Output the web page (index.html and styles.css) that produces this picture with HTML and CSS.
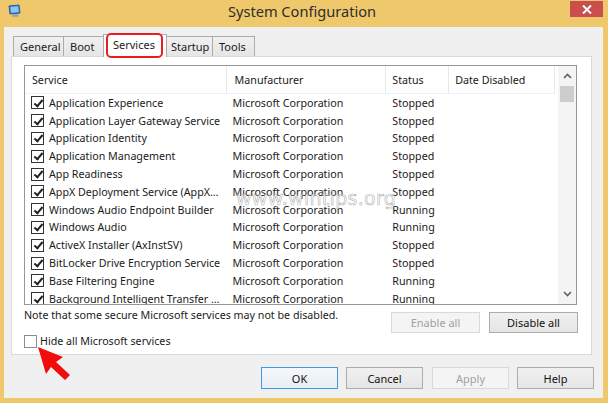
FILE: index.html
```html
<!DOCTYPE html>
<html>
<head>
<meta charset="utf-8">
<link rel="stylesheet" href="styles.css">
</head>
<body>
<div class="window">
  <div class="titlebar">
    <svg class="app-icon" width="13" height="14" viewBox="0 0 13 14">
      <path d="M1 2 L11 1 L12 9 L2 10 Z" fill="#3f86d6" stroke="#2a5b9c" stroke-width="1"/>
      <path d="M2.5 3 L10 2.3 L10.8 8 L3.2 8.8 Z" fill="#8cc4f2"/>
      <path d="M4 10.5 L10 10 L11 12.5 L4.5 13 Z" fill="#9aa4ae"/>
    </svg>
    <div class="title">System Configuration</div>
    <div class="close">
      <svg width="10" height="9" viewBox="0 0 10 9"><path d="M1 0.5 L9 8.5 M9 0.5 L1 8.5" stroke="#fff" stroke-width="2"/></svg>
    </div>
  </div>
  <div class="client">
    <div class="tabs">
      <div class="tab w-general">General</div>
      <div class="tab w-boot">Boot</div>
      <div class="tab w-services active">Services</div>
      <div class="tab w-startup">Startup</div>
      <div class="tab w-tools">Tools</div>
    </div>
    <div class="page">
      <div class="list">
        <div class="list-main">
          <div class="header">
            <div class="col c1">Service</div>
            <div class="col c2">Manufacturer</div>
            <div class="col c3">Status</div>
            <div class="col c4">Date Disabled</div>
          </div>
          <div class="rows">
            <div class="row"><div class="col c1"><span class="cb checked"></span>Application Experience</div><div class="col c2">Microsoft Corporation</div><div class="col c3">Stopped</div><div class="col c4"></div></div>
            <div class="row"><div class="col c1"><span class="cb checked"></span>Application Layer Gateway Service</div><div class="col c2">Microsoft Corporation</div><div class="col c3">Stopped</div><div class="col c4"></div></div>
            <div class="row"><div class="col c1"><span class="cb checked"></span>Application Identity</div><div class="col c2">Microsoft Corporation</div><div class="col c3">Stopped</div><div class="col c4"></div></div>
            <div class="row"><div class="col c1"><span class="cb checked"></span>Application Management</div><div class="col c2">Microsoft Corporation</div><div class="col c3">Stopped</div><div class="col c4"></div></div>
            <div class="row"><div class="col c1"><span class="cb checked"></span>App Readiness</div><div class="col c2">Microsoft Corporation</div><div class="col c3">Stopped</div><div class="col c4"></div></div>
            <div class="row"><div class="col c1"><span class="cb checked"></span>AppX Deployment Service (AppX…</div><div class="col c2">Microsoft Corporation</div><div class="col c3">Stopped</div><div class="col c4"></div></div>
            <div class="row"><div class="col c1"><span class="cb checked"></span>Windows Audio Endpoint Builder</div><div class="col c2">Microsoft Corporation</div><div class="col c3">Running</div><div class="col c4"></div></div>
            <div class="row"><div class="col c1"><span class="cb checked"></span>Windows Audio</div><div class="col c2">Microsoft Corporation</div><div class="col c3">Running</div><div class="col c4"></div></div>
            <div class="row"><div class="col c1"><span class="cb checked"></span>ActiveX Installer (AxInstSV)</div><div class="col c2">Microsoft Corporation</div><div class="col c3">Stopped</div><div class="col c4"></div></div>
            <div class="row"><div class="col c1"><span class="cb checked"></span>BitLocker Drive Encryption Service</div><div class="col c2">Microsoft Corporation</div><div class="col c3">Stopped</div><div class="col c4"></div></div>
            <div class="row"><div class="col c1"><span class="cb checked"></span>Base Filtering Engine</div><div class="col c2">Microsoft Corporation</div><div class="col c3">Running</div><div class="col c4"></div></div>
            <div class="row"><div class="col c1"><span class="cb checked"></span>Background Intelligent Transfer …</div><div class="col c2">Microsoft Corporation</div><div class="col c3">Running</div><div class="col c4"></div></div>
          </div>
        </div>
        <div class="scrollbar">
          <div class="sb-btn"><svg width="9" height="6" viewBox="0 0 9 6"><path d="M1 5 L4.5 1.5 L8 5" fill="none" stroke="#606060" stroke-width="1.6"/></svg></div>
          <div class="sb-thumb"></div>
          <div class="sb-track"></div>
          <div class="sb-btn"><svg width="9" height="6" viewBox="0 0 9 6"><path d="M1 1 L4.5 4.5 L8 1" fill="none" stroke="#606060" stroke-width="1.6"/></svg></div>
        </div>
      </div>
      <div class="note-row">
        <div class="note">Note that some secure Microsoft services may not be disabled.</div>
        <div class="note-btns">
          <div class="btn wide disabled">Enable all</div>
          <div class="btn wide">Disable all</div>
        </div>
      </div>
      <div class="hide-row"><span class="cb plain"></span>Hide all Microsoft services</div>
    </div>
    <div class="footer">
      <div class="btn default">OK</div>
      <div class="btn">Cancel</div>
      <div class="btn disabled">Apply</div>
      <div class="btn">Help</div>
    </div>
  </div>

  <div class="tab-highlight"></div>
  <div class="watermark">www.wintips.org</div>
  <svg class="arrow" width="40" height="36" viewBox="0 0 40 36">
    <path d="M1 1 L26 11 L19 16 L33 29 L28 34 L14 21 L9 28 Z" fill="#f20d0d"/>
  </svg>
</div>
</body>
</html>
```

FILE: styles.css
```css
* { box-sizing: border-box; }
body {
  margin: 0;
  font-family: "Noto Sans", "Open Sans", sans-serif;
  font-size: 10.7px;
  color: #1a1a1a;
}
.window {
  width: 608px;
  height: 403px;
  background: #f0c86c;
  display: flex;
  flex-direction: column;
  position: relative;
  overflow: hidden;
}
.titlebar {
  height: 27px;
  display: grid;
  grid-template-columns: 1fr auto 1fr;
  align-items: start;
}
.app-icon { margin: 4px 0 0 8px; }
.title {
  font-size: 14.6px;
  line-height: 22px;
  color: #2d2d2d;
  padding-right: 4px;
}
.close {
  justify-self: end;
  margin: 1px 5px 0 0;
  width: 33px;
  height: 16px;
  background: #c94f4f;
  display: flex;
  align-items: center;
  justify-content: center;
}
.client {
  flex: 1;
  margin: 0 5px 5px 4px;
  background: #f0f0f0;
  padding: 9px 10px 0 7px;
  display: flex;
  flex-direction: column;
}
.tabs {
  display: flex;
  height: 20px;
  align-items: flex-end;
  padding-left: 2px;
}
.tab {
  height: 20px;
  border: 1px solid #acacac;
  border-bottom: none;
  border-left: none;
  background: linear-gradient(#f0f0f0, #e5e5e5);
  line-height: 19px;
  padding-left: 6px;
  font-size: 11px;
}
.tab:first-child { border-left: 1px solid #acacac; }
.w-general { width: 51px; }
.w-boot { width: 41px; }
.w-services { width: 60px; }
.w-startup { width: 48px; }
.w-tools { width: 42px; }
.tab.active {
  height: 23px;
  margin: 0 -2px -1px -2px;
  width: 64px;
  background: #fff;
  border-left: 1px solid #acacac;
  position: relative;
  z-index: 1;
  padding-left: 9px;
  line-height: 20px;
}
.page {
  height: 299px;
  margin-right: 1px;
  border: 1px solid #d9d9d9;
  background: #fff;
  padding: 8px 14px 0 12px;
  display: flex;
  flex-direction: column;
}
.list {
  height: 240px;
  border: 1px solid #979797;
  display: flex;
  overflow: hidden;
}
.list-main { flex: 1; overflow: hidden; }
.header {
  display: flex;
  height: 28px;
  border-bottom: 1px solid #eef1f5;
}
.header .col {
  line-height: 28px;
  border-right: 1px solid #e5e8ed;
  padding-left: 7px;
}
.c1 { width: 202px; }
.c2 { width: 160px; }
.c3 { width: 63px; }
.c4 { width: 106px; }
.header .c2 { padding-left: 8px; }
.header .c3, .header .c4 { padding-left: 6px; }
.rows { display: flex; flex-direction: column; }
.row {
  display: flex;
  height: 17.8px;
  flex-shrink: 0;
  align-items: center;
  white-space: nowrap;
}
.row .col { padding-left: 6px; display: flex; align-items: center; overflow: hidden; }
.cb {
  display: inline-block;
  width: 13px;
  height: 13px;
  border: 1px solid #333;
  background: #fff;
  margin-right: 5px;
  flex-shrink: 0;
  position: relative;
}
.cb.checked::after {
  content: "";
  position: absolute;
  left: 3.5px;
  top: 0.5px;
  width: 3px;
  height: 7px;
  border-right: 2px solid #222;
  border-bottom: 2px solid #222;
  transform: rotate(40deg);
}
.cb.plain { border-color: #8c8c8c; margin-right: 3px; }
.scrollbar {
  width: 18px;
  margin-left: 3px;
  background: #f4f4f4;
  display: flex;
  flex-direction: column;
}
.sb-btn {
  height: 20px;
  display: flex;
  align-items: center;
  justify-content: center;
}
.sb-thumb {
  height: 16px;
  margin: 0 2px;
  background: #cdcdcd;
}
.sb-track { flex: 1; }
.note-row {
  display: flex;
  justify-content: space-between;
  align-items: flex-start;
  margin-top: 2px;
  margin-right: -1px;
}
.note { line-height: 16px; }
.note-btns { display: flex; gap: 9px; margin-top: 5px; }
.btn {
  width: 77px;
  height: 22px;
  border: 1px solid #acacac;
  background: linear-gradient(#f0f0f0, #e5e5e5);
  display: flex;
  align-items: center;
  justify-content: center;
  color: #111;
  font-size: 11px;
}
.btn.wide { width: 89px; height: 21px; }
.btn.disabled {
  border-color: #d9d9d9;
  background: #f4f4f4;
  color: #a0a0a0;
}
.btn.default { border-color: #3c9be6; background: linear-gradient(#f4f8fc, #e8eef4); }
.hide-row {
  display: flex;
  align-items: center;
  margin-top: 1px;
  height: 14px;
}
.footer {
  display: flex;
  justify-content: flex-end;
  gap: 8px;
  margin-top: 12px;
  margin-right: -1px;
}
.footer .btn:nth-child(2) { margin-right: 1px; }
.tab-highlight {
  position: absolute;
  left: 106px;
  top: 33px;
  width: 57px;
  height: 25px;
  border: 2.5px solid #ea1c24;
  border-radius: 5px;
  z-index: 2;
}
.watermark {
  position: absolute;
  left: 236px;
  top: 187px;
  font-family: "DejaVu Sans", sans-serif;
  font-size: 19px;
  color: rgba(255,255,255,0.55);
  -webkit-text-stroke: 0.6px rgba(120,120,120,0.6);
  letter-spacing: 0.3px;
}
.arrow {
  position: absolute;
  left: 37px;
  top: 346px;
}
```
